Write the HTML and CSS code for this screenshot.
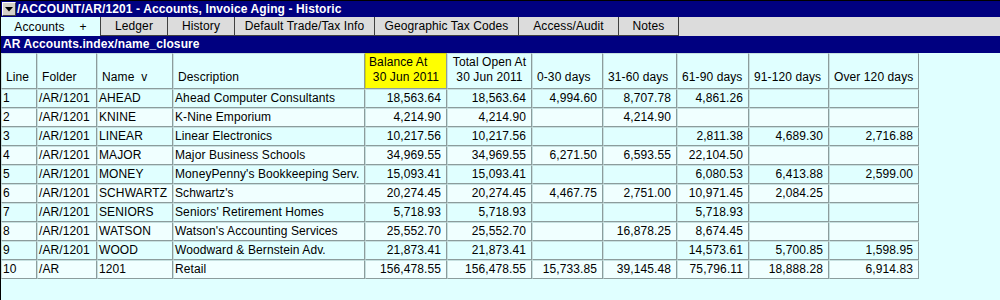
FILE: index.html
```html
<!DOCTYPE html>
<html>
<head>
<meta charset="utf-8">
<link rel="stylesheet" href="styles.css">
</head>
<body>
<div class="window">
  <div class="titlebar">
    <span class="menu-btn"><svg width="8" height="5" viewBox="0 0 8 5"><polygon points="0,0 8,0 4,4.5" fill="#000"/></svg></span>
    <span class="title">/ACCOUNT/AR/1201 - Accounts, Invoice Aging - Historic</span>
  </div>
  <div class="tabs">
    <div class="tab active t-accounts">Accounts<span class="plus">+</span></div>
    <div class="tab t-ledger">Ledger</div>
    <div class="tab t-history">History</div>
    <div class="tab t-default">Default Trade/Tax Info</div>
    <div class="tab t-geo">Geographic Tax Codes</div>
    <div class="tab t-access">Access/Audit</div>
    <div class="tab t-notes">Notes</div>
  </div>
  <div class="subbar">AR Accounts.index/name_closure</div>
  <table class="grid">
    <thead>
      <tr>
        <th class="c-line">Line</th>
        <th class="c-folder">Folder</th>
        <th class="c-name">Name&nbsp;&nbsp;v</th>
        <th class="c-desc">Description</th>
        <th class="c-bal two hl"><span class="first">Balance At</span>30 Jun 2011</th>
        <th class="c-total two">Total Open At<br>30 Jun 2011</th>
        <th class="c-a30">0-30 days</th>
        <th class="c-a60">31-60 days</th>
        <th class="c-a90">61-90 days</th>
        <th class="c-a120">91-120 days</th>
        <th class="c-over">Over 120 days</th>
      </tr>
    </thead>
    <tbody>
      <tr><td>1</td><td>/AR/1201</td><td>AHEAD</td><td>Ahead Computer Consultants</td><td class="num">18,563.64</td><td class="num">18,563.64</td><td class="num">4,994.60</td><td class="num">8,707.78</td><td class="num">4,861.26</td><td class="num"></td><td class="num"></td></tr>
      <tr><td>2</td><td>/AR/1201</td><td>KNINE</td><td>K-Nine Emporium</td><td class="num">4,214.90</td><td class="num">4,214.90</td><td class="num"></td><td class="num">4,214.90</td><td class="num"></td><td class="num"></td><td class="num"></td></tr>
      <tr><td>3</td><td>/AR/1201</td><td>LINEAR</td><td>Linear Electronics</td><td class="num">10,217.56</td><td class="num">10,217.56</td><td class="num"></td><td class="num"></td><td class="num">2,811.38</td><td class="num">4,689.30</td><td class="num">2,716.88</td></tr>
      <tr><td>4</td><td>/AR/1201</td><td>MAJOR</td><td>Major Business Schools</td><td class="num">34,969.55</td><td class="num">34,969.55</td><td class="num">6,271.50</td><td class="num">6,593.55</td><td class="num">22,104.50</td><td class="num"></td><td class="num"></td></tr>
      <tr><td>5</td><td>/AR/1201</td><td>MONEY</td><td>MoneyPenny's Bookkeeping Serv.</td><td class="num">15,093.41</td><td class="num">15,093.41</td><td class="num"></td><td class="num"></td><td class="num">6,080.53</td><td class="num">6,413.88</td><td class="num">2,599.00</td></tr>
      <tr><td>6</td><td>/AR/1201</td><td>SCHWARTZ</td><td>Schwartz's</td><td class="num">20,274.45</td><td class="num">20,274.45</td><td class="num">4,467.75</td><td class="num">2,751.00</td><td class="num">10,971.45</td><td class="num">2,084.25</td><td class="num"></td></tr>
      <tr><td>7</td><td>/AR/1201</td><td>SENIORS</td><td>Seniors' Retirement Homes</td><td class="num">5,718.93</td><td class="num">5,718.93</td><td class="num"></td><td class="num"></td><td class="num">5,718.93</td><td class="num"></td><td class="num"></td></tr>
      <tr><td>8</td><td>/AR/1201</td><td>WATSON</td><td>Watson's Accounting Services</td><td class="num">25,552.70</td><td class="num">25,552.70</td><td class="num"></td><td class="num">16,878.25</td><td class="num">8,674.45</td><td class="num"></td><td class="num"></td></tr>
      <tr><td>9</td><td>/AR/1201</td><td>WOOD</td><td>Woodward &amp; Bernstein Adv.</td><td class="num">21,873.41</td><td class="num">21,873.41</td><td class="num"></td><td class="num"></td><td class="num">14,573.61</td><td class="num">5,700.85</td><td class="num">1,598.95</td></tr>
      <tr><td>10</td><td>/AR</td><td>1201</td><td>Retail</td><td class="num">156,478.55</td><td class="num">156,478.55</td><td class="num">15,733.85</td><td class="num">39,145.48</td><td class="num">75,796.11</td><td class="num">18,888.28</td><td class="num">6,914.83</td></tr>
    </tbody>
  </table>
</div>
</body>
</html>
```

FILE: styles.css
```css
html, body {
  margin: 0;
  padding: 0;
  background: #e0ffff;
  font-family: "Liberation Sans", Arial, sans-serif;
  font-size: 12px;
  letter-spacing: 0.1px;
  color: #000;
}

.window {
  border-left: 1px solid #000;
  border-top: 1px solid #000;
  min-height: 299px;
}

.titlebar {
  height: 16px;
  background: #000080;
  color: #fff;
  font-weight: bold;
  display: flex;
  align-items: center;
}

.menu-btn {
  box-sizing: border-box;
  width: 14px;
  height: 14px;
  margin-left: 1px;
  background: #d4d0c8;
  border: 1px solid;
  border-color: #fff #404040 #404040 #fff;
  display: flex;
  align-items: center;
  justify-content: center;
}

.title {
  margin-left: 1px;
  line-height: 16px;
}

.tabs {
  display: flex;
  height: 19px;
  background: #dcdcdc;
}

.tab {
  box-sizing: border-box;
  height: 19px;
  border-right: 1px solid #404040;
  border-bottom: 1px solid #404040;
  display: flex;
  align-items: center;
  justify-content: center;
  white-space: nowrap;
}

.tab.active {
  background: #e0ffff;
  border-bottom: none;
}

.plus { margin-left: 15px; }

.t-accounts { width: 100px; }
.t-ledger { width: 67px; }
.t-history { width: 67px; }
.t-default { width: 140px; }
.t-geo { width: 144px; }
.t-access { width: 100px; }
.t-notes { width: 60px; }

.subbar {
  height: 17px;
  line-height: 17px;
  background: #000080;
  color: #fff;
  font-weight: bold;
  padding-left: 2px;
}

.grid {
  border-collapse: separate;
  border-spacing: 0;
  table-layout: fixed;
  width: 918px;
}

.grid th,
.grid td {
  box-sizing: border-box;
  border-style: solid;
  border-width: 1px;
  border-color: #c6e0e0 #8c9c9c #8c9c9c #c6e0e0;
  white-space: nowrap;
  overflow: hidden;
}

.grid th {
  height: 36px;
  vertical-align: bottom;
  font-weight: normal;
  text-align: left;
  line-height: 15px;
  padding: 0 2px 3px 4px;
  background: #e0ffff;
}

.grid th.two { text-align: center; padding-left: 2px; }

.grid th .first {
  display: block;
  text-align: left;
  padding-left: 1px;
}

.grid th.hl {
  background: #ffff00;
  border-color: #d8d800 #8c9c9c #8c9c9c #d8d800;
}

.grid td {
  height: 19px;
  line-height: 17px;
  padding: 0 1px;
}

.grid td.num {
  text-align: right;
  padding-right: 5px;
}

.grid tbody tr:nth-child(odd) td { background: #e0ffff; }
.grid tbody tr:nth-child(even) td { background: #f0ffff; }

.c-line { width: 36px; }
.c-folder { width: 60px; }
.c-name { width: 76px; }
.c-desc { width: 192px; }
.c-bal { width: 82px; }
.c-total { width: 85px; }
.c-a30 { width: 71px; }
.c-a60 { width: 74px; }
.c-a90 { width: 72px; }
.c-a120 { width: 80px; }
.c-over { width: 90px; }
```
